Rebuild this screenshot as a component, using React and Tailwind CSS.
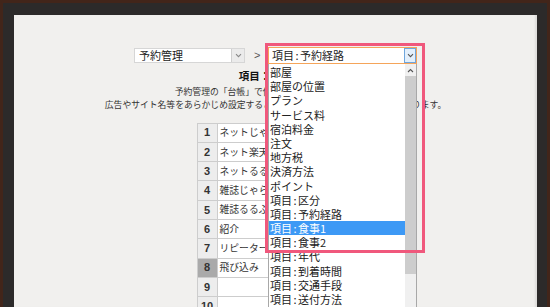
import React from "react";

const JP = { fontFamily: '"Noto Sans CJK JP", "Noto Sans", sans-serif' };

const OPTIONS = [
  "部屋", "部屋の位置", "プラン", "サービス料", "宿泊料金", "注文", "地方税", "決済方法", "ポイント",
  "項目:区分", "項目:予約経路", "項目:食事1", "項目:食事2", "項目:年代", "項目:到着時間", "項目:交通手段", "項目:送付方法",
];

const ROWS = ["ネットじゃらん", "ネット楽天", "ネットるるぶ", "雑誌じゃらん", "雑誌るるぶ", "紹介", "リピーター", "飛び込み", "", ""];

function Label({ text }) {
  const parts = text.split(":");
  if (parts.length < 2) return text;
  return (
    <>
      {parts[0]}
      <span className="px-[1.5px]">:</span>
      {parts[1]}
    </>
  );
}

function Chevron({ up, color = "#666" }) {
  return (
    <svg width="7" height="5" viewBox="0 0 7 5">
      <path d={up ? "M1 4 L3.5 1.5 L6 4" : "M1 1.2 L3.5 3.7 L6 1.2"} fill="none" stroke={color} strokeWidth="1.1" />
    </svg>
  );
}

export default function App() {
  return (
    <div className="w-[550px] h-[307px] overflow-hidden bg-[#42251a] pt-[3px] px-[3px] flex" style={JP}>
      <div className="flex-1 bg-[#2c2a2a] pt-[12px] pl-[11px] pr-[10px] flex">
        <div className="flex-1 bg-[#f1f0ee] flex flex-col items-center pt-[32px] shadow-[inset_-3px_0_2px_-1px_rgba(0,0,0,0.08)]">
          {/* selector row */}
          <div className="flex items-center h-[17px]">
            <div className="w-[111px] h-[15px] bg-white border border-[#d6d6d6] flex items-center">
              <div className="flex-1 pl-[4px] text-[11px] leading-[13px] text-[#222]">予約管理</div>
              <div className="w-[13px] h-full bg-[#ebebeb] border-l border-[#cfcfcf] flex items-center justify-center">
                <Chevron color="#888" />
              </div>
            </div>
            <div className="ml-[9px] mr-[8px] w-[6px] text-[11px] leading-[13px] text-[#555]" style={{ fontFamily: '"Liberation Sans", sans-serif' }}>&gt;</div>
            <div className="relative w-[149px] h-[17px] bg-white border border-[#f5a55a] flex items-center">
              <div className="flex-1 pl-[3px] text-[11px] leading-[13px] text-[#222]"><Label text="項目:予約経路" /></div>
              <div className="w-[12px] h-[15px] bg-[#e3effb] border border-[#6ea6dd] flex items-center justify-center">
                <Chevron color="#555" />
              </div>

              {/* open dropdown list */}
              <div className="absolute left-[-1px] top-[16px] w-[149px] h-[250px] bg-white border-l border-r border-[#a8a8a8] flex z-10">
                <div className="flex-1 pt-[1px]">
                  {OPTIONS.map((o) => (
                    <div
                      key={o}
                      className={
                        "h-[14.2px] pl-[1px] text-[11px] leading-[14.2px] whitespace-nowrap " +
                        (o === "項目:食事1" ? "bg-[#3d99f5] text-white" : "text-[#222]")
                      }
                    >
                      <Label text={o} />
                    </div>
                  ))}
                </div>
                <div className="w-[11px] bg-[#f0f0f0] flex flex-col">
                  <div className="h-[12px] flex items-center justify-center">
                    <Chevron up color="#555" />
                  </div>
                  <div className="h-[198px] bg-[#cdcdcd]" />
                </div>
              </div>

              {/* highlight annotation */}
              <div className="absolute left-[-4px] top-[-5px] w-[160px] h-[210px] border-[3px] border-[#f0587c] z-20 pointer-events-none" />
            </div>
          </div>

          {/* heading */}
          <div className="mt-[6px] text-[10.5px] leading-[12px] font-bold text-[#111]">項目：予約経路</div>
          <div className="mt-[3px] text-[8.8px] leading-[13px] text-[#333]">予約管理の「台帳」で使用する項目を設定します。</div>
          <div className="text-[8.8px] leading-[13px] text-[#333]">広告やサイト名等をあらかじめ設定することで、入力時に選択できるようになります。</div>

          {/* item table */}
          <div className="mt-[11.5px] w-[158px] border-l border-t border-[#cdcdcd]">
            {ROWS.map((r, i) => (
              <div key={i} className="flex h-[19.3px] border-b border-[#cdcdcd]">
                <div
                  className={
                    "w-[20px] border-r border-[#cdcdcd] flex items-center justify-center text-[11px] font-bold text-[#333] " +
                    (i === 7 ? "bg-[#aaaaaa]" : "bg-[#ededed]")
                  }
                  style={{ fontFamily: '"Liberation Sans", Arial, sans-serif' }}
                >
                  {i + 1}
                </div>
                <div className="flex-1 bg-white border-r border-[#cdcdcd] pl-[2px] flex items-center text-[9.8px] text-[#333] whitespace-nowrap">
                  {r}
                </div>
              </div>
            ))}
          </div>
        </div>
      </div>
    </div>
  );
}
